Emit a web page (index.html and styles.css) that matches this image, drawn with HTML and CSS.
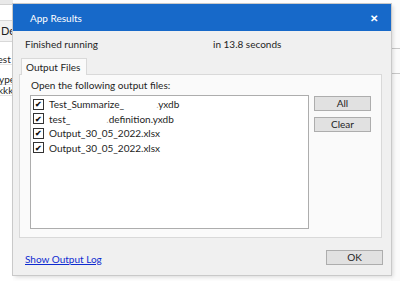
FILE: index.html
```html
<!DOCTYPE html>
<html lang="en">
<head>
  <meta charset="UTF-8">
  <title>App Results</title>
  <link rel="stylesheet" href="styles.css">
</head>
<body>
  <div class="desktop">
    <div class="behind">
      <div class="behind-top"></div>
      <div class="behind-tab">De</div>
      <div class="behind-row r1">uest</div>
      <div class="behind-row r2">ype</div>
      <div class="behind-row r3">kkkk</div>
    </div>
    <div class="behind-right">
      <div class="line l1"></div>
      <div class="line l2"></div>
    </div>

    <div class="dialog">
      <div class="titlebar">
        <span>App Results</span>
        <span class="close">✕</span>
      </div>
      <div class="dialog-body">
        <div class="status">
          <span>Finished running</span>
          <span>in 13.8 seconds</span>
        </div>

        <div class="tabs">
          <div class="tab">Output Files</div>
        </div>
        <div class="panel">
          <div class="panel-label">Open the following output files:</div>
          <div class="panel-main">
            <div class="file-list">
              <label class="file"><span class="check">✔</span><span class="name">Test_Summarize_<span class="blank b1"></span><span class="dot">.</span>yxdb</span></label>
              <label class="file"><span class="check">✔</span><span class="name">test_<span class="blank b2"></span><span class="dot">.</span>definition.yxdb</span></label>
              <label class="file"><span class="check">✔</span><span class="name">Output_30_05_2022.xlsx</span></label>
              <label class="file"><span class="check">✔</span><span class="name">Output_30_05_2022.xlsx</span></label>
            </div>
            <div class="side-buttons">
              <button class="btn">All</button>
              <button class="btn">Clear</button>
            </div>
          </div>
        </div>

        <div class="footer">
          <a class="log-link" href="#">Show Output Log</a>
          <button class="btn ok">OK</button>
        </div>
      </div>
    </div>
  </div>
</body>
</html>
```

FILE: styles.css
```css
body {
  margin: 0;
  background: #ffffff;
  font-family: Lato, "Noto Sans", sans-serif;
  font-size: 10px;
  color: #1e1e1e;
}
.desktop {
  position: relative;
  width: 400px;
  height: 281px;
  overflow: hidden;
  background: #fdfdfd;
}
.behind {
  position: absolute;
  left: 0;
  top: 0;
  width: 13px;
  height: 281px;
  background: #ffffff;
  overflow: hidden;
}
.behind-top {
  height: 4px;
  background: #e9e9e9;
  border-bottom: 1px solid #d2d2d2;
}
.behind-tab {
  margin-top: 15px;
  height: 20px;
  line-height: 20px;
  background: #f2f2f2;
  border-top: 1px solid #d8d8d8;
  border-bottom: 1px solid #d8d8d8;
  padding-left: 1px;
  font-size: 11px;
  white-space: nowrap;
}
.behind-row {
  height: 10px;
  line-height: 10px;
  font-size: 10px;
  white-space: nowrap;
  border-bottom: 1px solid #e4e4e4;
}
.behind-row.r1 { margin-top: 12px; margin-left: -8px; }
.behind-row.r2 { margin-top: 9px; margin-left: -1px; }
.behind-row.r3 { margin-top: 0; margin-left: -2px; }
.behind-right {
  position: absolute;
  left: 391px;
  top: 0;
  width: 9px;
  height: 281px;
  background: #fbfbfb;
}
.behind-right .line {
  height: 1px;
  background: #c8c8c8;
}
.behind-right .l1 { margin-top: 48px; }
.behind-right .l2 { margin-top: 24px; }

.dialog {
  position: absolute;
  left: 13px;
  top: 4px;
  width: 378px;
  height: 271px;
  background: #f0f0f0;
  box-shadow: 0 0 0 1px #c9c9c9, 2px 2px 4px rgba(0, 0, 0, 0.15);
  display: flex;
  flex-direction: column;
}
.titlebar {
  height: 27px;
  background: #1769c9;
  color: #ffffff;
  display: flex;
  justify-content: space-between;
  align-items: center;
  padding: 0 13px 0 17px;
  font-size: 10px;
}
.close {
  font-size: 10px;
  font-weight: bold;
}
.dialog-body {
  flex: 1;
  display: flex;
  flex-direction: column;
  padding: 0 9px 0 6px;
}
.status {
  display: grid;
  grid-template-columns: 188px 1fr;
  padding: 6px 0 0 6px;
  height: 20px;
  line-height: 14px;
}
.tabs {
  display: flex;
  padding-left: 2px;
}
.tab {
  height: 16px;
  line-height: 16px;
  padding: 0 6px 0 4px;
  background: #fafafa;
  border: 1px solid #d9d9d9;
  border-bottom: none;
  position: relative;
  top: 1px;
}
.panel {
  height: 164px;
  background: #fafafa;
  border: 1px solid #d9d9d9;
  box-sizing: border-box;
  padding: 3px 10px 0 10px;
}
.panel-label {
  height: 17px;
  line-height: 14px;
  padding-left: 1px;
}
.panel-main {
  display: flex;
  gap: 5px;
}
.file-list {
  width: 279px;
  height: 134px;
  box-sizing: border-box;
  background: #ffffff;
  border: 1px solid #adadad;
  padding: 1px 0 0 2px;
}
.file {
  display: flex;
  align-items: center;
  height: 14.5px;
  gap: 5px;
  white-space: nowrap;
}
.blank {
  display: inline-block;
}
.blank.b1 { width: 32px; }
.blank.b2 { width: 36px; }
.check {
  width: 9px;
  height: 9px;
  border: 1px solid #333333;
  display: flex;
  justify-content: center;
  align-items: center;
  font-size: 8px;
  font-weight: bold;
  line-height: 1;
  color: #111111;
}
.dot {
  color: #b4b4b4;
}
.side-buttons {
  display: flex;
  flex-direction: column;
  gap: 6px;
  padding-top: 1px;
}
.btn {
  width: 57px;
  height: 15px;
  padding: 0;
  background: #e1e1e1;
  border: 1px solid #adadad;
  font-family: Lato, "Noto Sans", sans-serif;
  font-size: 10px;
  line-height: 13px;
  color: #1e1e1e;
}
.footer {
  display: flex;
  justify-content: space-between;
  align-items: center;
  padding: 12px 0 0 6px;
}
.log-link {
  color: #0e2bd0;
  text-decoration: underline;
  margin-top: 2px;
}
.btn.ok {
  margin-right: -1px;
}
```
